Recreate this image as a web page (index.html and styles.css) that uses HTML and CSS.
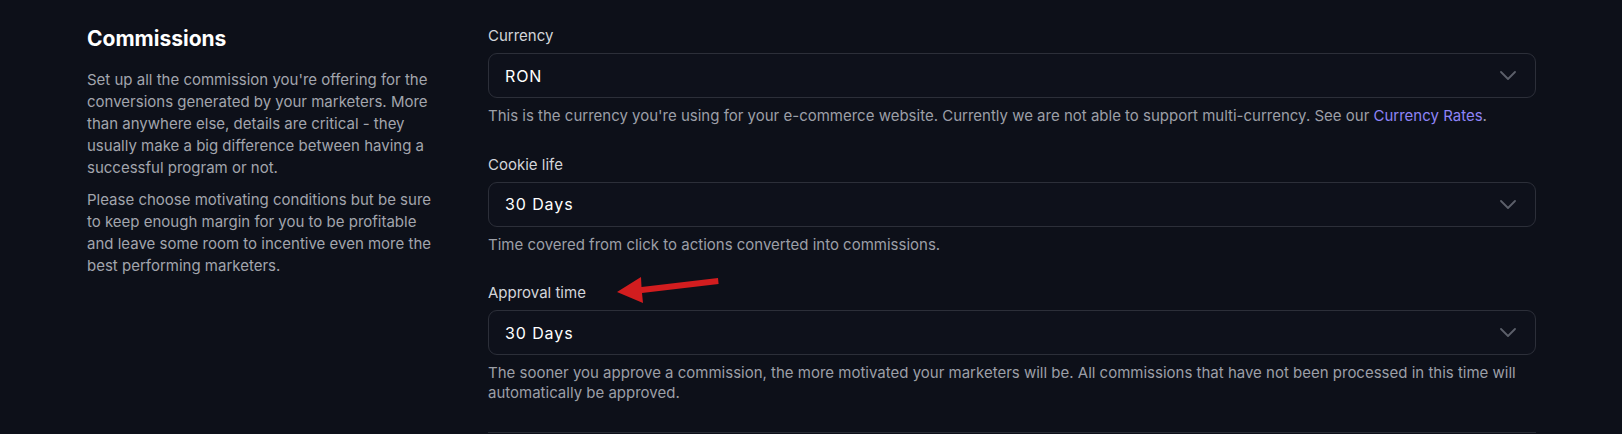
FILE: index.html
```html
<!DOCTYPE html>
<html lang="en">
<head>
<meta charset="utf-8">
<title>Commissions</title>
<link rel="stylesheet" href="styles.css">
</head>
<body>
<div class="page">
  <section class="section">
    <div class="intro">
      <h2 class="intro-title">Commissions</h2>
      <p class="intro-text">Set up all the commission you're offering for the conversions generated by your marketers. More than anywhere else, details are critical - they usually make a big difference between having a successful program or not.</p>
      <p class="intro-text">Please choose motivating conditions but be sure to keep enough margin for you to be profitable and leave some room to incentive even more the best performing marketers.</p>
    </div>
    <div class="fields">
      <div class="field">
        <div class="field-label">Currency</div>
        <div class="select"><span class="select-value">RON</span><svg class="chevron" width="16" height="9" viewBox="0 0 16 9"><path d="M1 1l7 7 7-7" fill="none" stroke="currentColor" stroke-width="1.8" stroke-linecap="round" stroke-linejoin="round"/></svg></div>
        <p class="field-help">This is the currency you're using for your e-commerce website. Currently we are not able to support multi-currency. See our <a class="link" href="#">Currency Rates</a>.</p>
      </div>
      <div class="field">
        <div class="field-label">Cookie life</div>
        <div class="select"><span class="select-value">30 Days</span><svg class="chevron" width="16" height="9" viewBox="0 0 16 9"><path d="M1 1l7 7 7-7" fill="none" stroke="currentColor" stroke-width="1.8" stroke-linecap="round" stroke-linejoin="round"/></svg></div>
        <p class="field-help">Time covered from click to actions converted into commissions.</p>
      </div>
      <div class="field">
        <div class="field-label">Approval time</div>
        <div class="select"><span class="select-value">30 Days</span><svg class="chevron" width="16" height="9" viewBox="0 0 16 9"><path d="M1 1l7 7 7-7" fill="none" stroke="currentColor" stroke-width="1.8" stroke-linecap="round" stroke-linejoin="round"/></svg></div>
        <p class="field-help">The sooner you approve a commission, the more motivated your marketers will be. All commissions that have not been processed in this time will automatically be approved.</p>
      </div>
    </div>
  </section>
  <svg class="annotation" width="1622" height="434" viewBox="0 0 1622 434">
    <polygon fill="#d21d1f" points="617,292 641,277 641.5,287 718,278 718.6,284 642,293 643,303"/>
  </svg>
</div>
</body>
</html>
```

FILE: styles.css
```css
* { box-sizing: border-box; }
html, body { margin: 0; padding: 0; }
body {
  background: #0d1019;
  font-family: Inter, "Noto Sans", "Liberation Sans", sans-serif;
  color: #a2a5ad;
  width: 1622px;
  height: 434px;
  overflow: hidden;
}
.page {
  position: relative;
  height: 434px;
  padding: 25px 86px 0 87px;
}
.section {
  display: grid;
  grid-template-columns: 353px 1fr;
  column-gap: 48px;
}
.intro-title {
  margin: 0 0 16px;
  font-size: 21px;
  line-height: 28px;
  font-weight: 700;
  color: #ffffff;
}
.intro-text {
  margin: 0 0 10px;
  font-size: 15px;
  line-height: 22px;
  color: #a2a5ad;
}
.fields {
  padding-top: 1px;
  padding-bottom: 29px;
  border-bottom: 1px solid #262a33;
}
.field + .field { margin-top: 28.5px; }
.field-label {
  font-size: 15px;
  line-height: 20px;
  color: #d3d5da;
  margin-bottom: 7px;
}
.select {
  height: 45px;
  border: 1px solid #2c2f39;
  border-radius: 9px;
  background: #0e111b;
  display: flex;
  align-items: center;
  justify-content: space-between;
  padding: 0 19px 0 16px;
}
.select-value {
  font-size: 16px;
  letter-spacing: 0.9px;
  color: #ffffff;
}
.chevron { color: #5c606a; }
.field-help {
  margin: 8px 0 0;
  font-size: 15px;
  line-height: 20px;
  color: #9c9fa7;
}
.link { color: #8d84f7; text-decoration: none; }
.annotation {
  position: absolute;
  left: 0;
  top: 0;
  pointer-events: none;
}
```
